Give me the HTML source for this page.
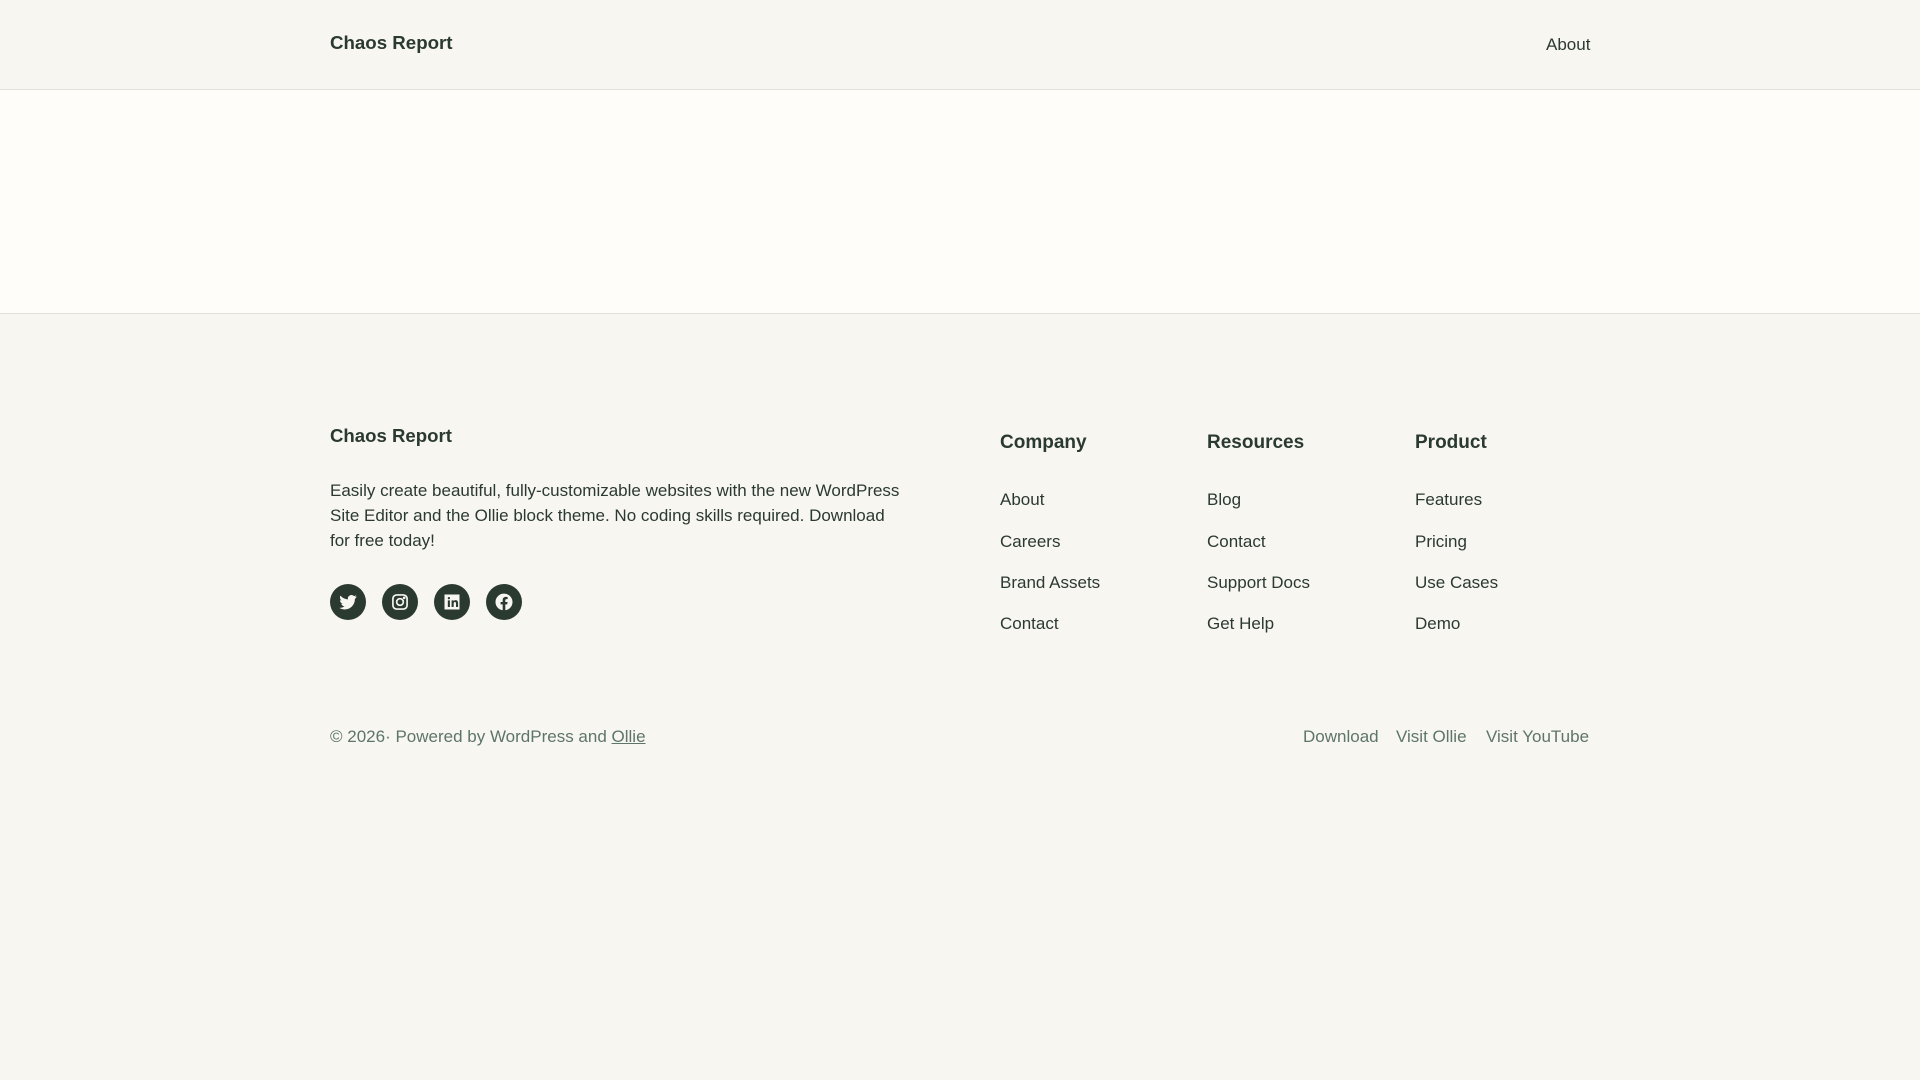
<!DOCTYPE html>
<html><head><meta charset="utf-8"><style>
*{margin:0;padding:0;box-sizing:border-box}
body{width:1920px;height:1080px;background:#f8f6f1;font-family:"Liberation Sans",sans-serif;color:#2b3a31;position:relative;overflow:hidden}
.a{position:absolute;white-space:nowrap;line-height:1}
header{position:absolute;left:0;top:0;width:1920px;height:90px;background:#f8f6f1;border-bottom:1px solid #e2e0d9}
main{position:absolute;left:0;top:90px;width:1920px;height:224px;background:#fefdf9;border-bottom:1px solid #e2e0d9}
.b{font-weight:bold;font-size:20px}
.t{font-size:17px}
.m{color:#5e7569;font-size:17px}
.ic{position:absolute;top:584px;width:36px;height:36px;border-radius:50%;background:#2b3a31}
.ic svg{position:absolute;left:8px;top:8px;width:20px;height:20px}
</style></head><body>
<header></header><main></main>
<div class="a b" style="left:330px;top:34px;font-size:18.7px">Chaos Report</div>
<div class="a t" style="left:1546px;top:36px">About</div>

<div class="a b" style="left:330px;top:427px;font-size:18.6px">Chaos Report</div>
<div class="a t" style="left:330px;top:478px;line-height:25px;white-space:normal;width:570px">Easily create beautiful, fully-customizable websites with the new WordPress Site Editor and the Ollie block theme. No coding skills required. Download for free today!</div>

<div class="ic" style="left:330px"><svg viewBox="0 0 24 24" fill="#f8f6f1"><path d="M22.5 5.6c-.8.4-1.6.6-2.5.7.9-.5 1.6-1.4 1.9-2.4-.8.5-1.8.9-2.7 1.1a4.3 4.3 0 0 0-7.3 3.9C8.3 8.7 5.1 7 3 4.4c-1.2 2-.6 4.5 1.3 5.8-.7 0-1.4-.2-1.9-.5 0 2.1 1.5 3.9 3.4 4.3-.6.2-1.3.2-1.9.1.5 1.7 2.1 3 4 3A8.6 8.6 0 0 1 1.5 19a12.2 12.2 0 0 0 18.8-10.8c.9-.6 1.6-1.4 2.2-2.3z"/></svg></div>
<div class="ic" style="left:382px"><svg viewBox="0 0 24 24" fill="none" stroke="#f8f6f1" stroke-width="2"><rect x="3.5" y="3.5" width="17" height="17" rx="4.5"/><circle cx="12" cy="12" r="4"/><circle cx="17" cy="7" r=".6" fill="#f8f6f1"/></svg></div>
<div class="ic" style="left:434px"><svg viewBox="0 0 24 24" fill="#f8f6f1"><path d="M3 3h18v18H3z M7 10v8h2.5v-8z M8.25 6a1.4 1.4 0 1 0 0 2.8 1.4 1.4 0 0 0 0-2.8z M11.5 10v8H14v-4.2c0-1.2.6-1.8 1.5-1.8s1.3.6 1.3 1.8V18h2.5v-4.8c0-2.3-1.2-3.4-3-3.4-1.1 0-1.9.5-2.3 1.2V10z" fill-rule="evenodd"/></svg></div>
<div class="ic" style="left:486px"><svg viewBox="0 0 24 24" fill="#f8f6f1"><path d="M12 2a10 10 0 0 0-1.6 19.9v-7H7.9V12h2.5V9.8c0-2.5 1.5-3.9 3.8-3.9 1.1 0 2.2.2 2.2.2v2.5h-1.3c-1.2 0-1.6.8-1.6 1.6V12h2.8l-.4 2.9h-2.3v7A10 10 0 0 0 12 2z"/></svg></div>

<div class="a b" style="left:1000px;top:433px;font-size:19px">Company</div>
<div class="a t" style="left:1000px;top:491px">About</div>
<div class="a t" style="left:1000px;top:533px">Careers</div>
<div class="a t" style="left:1000px;top:574px">Brand Assets</div>
<div class="a t" style="left:1000px;top:615px">Contact</div>

<div class="a b" style="left:1207px;top:433px;font-size:19px">Resources</div>
<div class="a t" style="left:1207px;top:491px">Blog</div>
<div class="a t" style="left:1207px;top:533px">Contact</div>
<div class="a t" style="left:1207px;top:574px">Support Docs</div>
<div class="a t" style="left:1207px;top:615px">Get Help</div>

<div class="a b" style="left:1415px;top:433px;font-size:19px">Product</div>
<div class="a t" style="left:1415px;top:491px">Features</div>
<div class="a t" style="left:1415px;top:533px">Pricing</div>
<div class="a t" style="left:1415px;top:574px">Use Cases</div>
<div class="a t" style="left:1415px;top:615px">Demo</div>

<div class="a m" style="left:330px;top:728px">© 2026· Powered by WordPress and <span style="text-decoration:underline">Ollie</span></div>
<div class="a m" style="left:1303px;top:728px">Download</div>
<div class="a m" style="left:1396px;top:728px">Visit Ollie</div>
<div class="a m" style="left:1486px;top:728px">Visit YouTube</div>
</body></html>
